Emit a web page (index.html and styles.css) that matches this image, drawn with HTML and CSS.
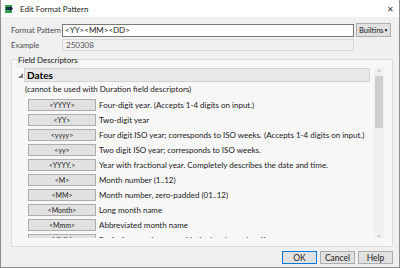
FILE: index.html
```html
<!DOCTYPE html>
<html>
<head>
    <title>Edit Format Pattern</title>
    <link rel="stylesheet" href="styles.css">
</head>
<body>
    <div class="window">
        <div class="titlebar">
            <svg class="app-icon" width="10" height="10" viewBox="0 0 10 10">
                <path d="M1 1h7v8H1z" fill="#2fa84f"/>
                <path d="M2 3h4V1.5L9 4.5 6 7.5V6H2z" fill="#1b2a4a"/>
            </svg>
            <span class="title">Edit Format Pattern</span>
            <span class="close">&#x2715;</span>
        </div>

        <div class="form">
            <div class="form-row">
                <label class="label">Format Pattern</label>
                <div class="input">&lt;YY&gt;&lt;MM&gt;&lt;DD&gt;</div>
                <button class="builtins">Builtins <span class="caret">&#9660;</span></button>
            </div>
            <div class="form-row example-row">
                <label class="label">Example</label>
                <div class="readonly">250308</div>
            </div>
        </div>

        <div class="group">
            <span class="legend">Field Descriptors</span>
            <div class="scroller">
                <div class="list">
                    <div class="group-head">
                        <svg class="disclosure" width="5" height="5" viewBox="0 0 5 5">
                            <path d="M5 0V5H0z" fill="#7a7a7a"/>
                        </svg>
                        <div class="head-bar">Dates</div>
                    </div>
                    <div class="note">(cannot be used with Duration field descriptors)</div>
                    <div class="row"><button class="tag">&lt;YYYY&gt;</button><span>Four-digit year. (Accepts 1-4 digits on input.)</span></div>
                    <div class="row"><button class="tag">&lt;YY&gt;</button><span>Two-digit year</span></div>
                    <div class="row"><button class="tag">&lt;yyyy&gt;</button><span>Four digit ISO year; corresponds to ISO weeks. (Accepts 1-4 digits on input.)</span></div>
                    <div class="row"><button class="tag">&lt;yy&gt;</button><span>Two digit ISO year; corresponds to ISO weeks.</span></div>
                    <div class="row"><button class="tag">&lt;YYYY.&gt;</button><span>Year with fractional year. Completely describes the date and time.</span></div>
                    <div class="row"><button class="tag">&lt;M&gt;</button><span>Month number (1..12)</span></div>
                    <div class="row"><button class="tag">&lt;MM&gt;</button><span>Month number, zero-padded (01..12)</span></div>
                    <div class="row"><button class="tag">&lt;Month&gt;</button><span>Long month name</span></div>
                    <div class="row"><button class="tag">&lt;Mmm&gt;</button><span>Abbreviated month name</span></div>
                    <div class="row"><button class="tag">&lt;MMM&gt;</button><span>Prefix for month name with the locale marker, if any.</span></div>
                </div>
                <div class="scrollbar">
                    <span class="arrow">&#8963;</span>
                    <div class="thumb"></div>
                    <div class="track"></div>
                    <span class="arrow">&#8964;</span>
                </div>
            </div>
        </div>

        <div class="actions">
            <button class="btn default">OK</button>
            <button class="btn">Cancel</button>
            <button class="btn">Help</button>
        </div>
    </div>
</body>
</html>
```

FILE: styles.css
```css
body {
    margin: 0;
    font-family: Lato, "Noto Sans", sans-serif;
    font-size: 8px;
    color: #1a1a1a;
    white-space: nowrap;
}
.window {
    width: 400px;
    height: 268px;
    box-sizing: border-box;
    border: 1px solid #8f8f8f;
    border-top: none;
    background: #f0f0f0;
    display: flex;
    flex-direction: column;
    overflow: hidden;
}
.titlebar {
    height: 17px;
    background: #fff;
    display: flex;
    align-items: center;
    padding-left: 3px;
    flex-shrink: 0;
}
.app-icon {
    margin-right: 6px;
}
.title {
    flex: 1;
}
.close {
    font-size: 8px;
    color: #333;
    margin-right: 5px;
}
.form {
    padding: 6px 0 0 10px;
    flex-shrink: 0;
}
.form-row {
    display: flex;
    align-items: center;
}
.example-row {
    margin-top: 2px;
}
.label {
    width: 51px;
    flex-shrink: 0;
    font-size: 7.6px;
    color: #4a4a4a;
}
.input {
    width: 292px;
    height: 13px;
    flex-shrink: 0;
    box-sizing: border-box;
    border: 1px solid #7a7a7a;
    background: #fff;
    padding-left: 2px;
    line-height: 11px;
}
.readonly {
    width: 292px;
    height: 12px;
    flex-shrink: 0;
    box-sizing: border-box;
    border: 1px solid #dadada;
    padding-left: 3px;
    line-height: 10px;
    color: #555;
}
.builtins {
    margin-left: 2px;
    width: 35px;
    height: 14px;
    flex-shrink: 0;
    padding: 0 2px;
    border: 1px solid #adadad;
    background: #e1e1e1;
    font-family: inherit;
    font-size: 7.5px;
    color: #1a1a1a;
    display: flex;
    align-items: center;
    justify-content: space-between;
}
.caret {
    font-size: 5px;
}
.group {
    margin: 8px 6px 0 10px;
    padding: 0 8px 0 6px;
    height: 188px;
    box-sizing: border-box;
    border: 1px solid #dcdcdc;
    border-radius: 2px;
    background: #f7f7f7;
    flex-shrink: 0;
}
.legend {
    display: block;
    width: max-content;
    height: 8px;
    line-height: 0;
    margin-left: -2px;
    padding: 0 2px;
    background: #f0f0f0;
    color: #222;
}
.scroller {
    display: flex;
    height: 170px;
}
.list {
    flex: 1;
    overflow: hidden;
}
.group-head {
    display: flex;
    align-items: flex-end;
}
.disclosure {
    margin: 0 1px 4px 0;
}
.head-bar {
    flex: 1;
    height: 14px;
    box-sizing: border-box;
    border: 1px solid #d2d2d2;
    background: #e8e8e8;
    font-weight: bold;
    font-size: 10px;
    line-height: 12px;
    padding-left: 2px;
    color: #000;
}
.note {
    margin: 1px 0 1px 7px;
    height: 13px;
    line-height: 13px;
}
.row {
    display: flex;
    align-items: center;
    height: 15px;
    padding-left: 10px;
}
.tag {
    width: 68px;
    height: 12px;
    flex-shrink: 0;
    box-sizing: border-box;
    border: 1px solid #adadad;
    background: #e1e1e1;
    font-family: inherit;
    font-size: 7px;
    color: #222;
    padding: 0;
    margin-right: 3px;
}
.scrollbar {
    width: 10px;
    margin-left: 4px;
    background: #f0f0f0;
    display: flex;
    flex-direction: column;
    align-items: center;
}
.arrow {
    font-size: 7px;
    color: #9a9a9a;
    height: 8px;
    line-height: 8px;
}
.thumb {
    width: 8px;
    height: 52px;
    background: #cdcdcd;
}
.track {
    flex: 1;
}
.actions {
    display: flex;
    justify-content: flex-end;
    gap: 3px;
    padding: 4px 6px 0 0;
}
.btn {
    width: 35px;
    height: 13px;
    box-sizing: border-box;
    border: 1px solid #adadad;
    background: #e1e1e1;
    font-family: inherit;
    font-size: 8.5px;
    color: #1a1a1a;
    padding: 0;
}
.btn.default {
    border-color: #0078d7;
}
```
